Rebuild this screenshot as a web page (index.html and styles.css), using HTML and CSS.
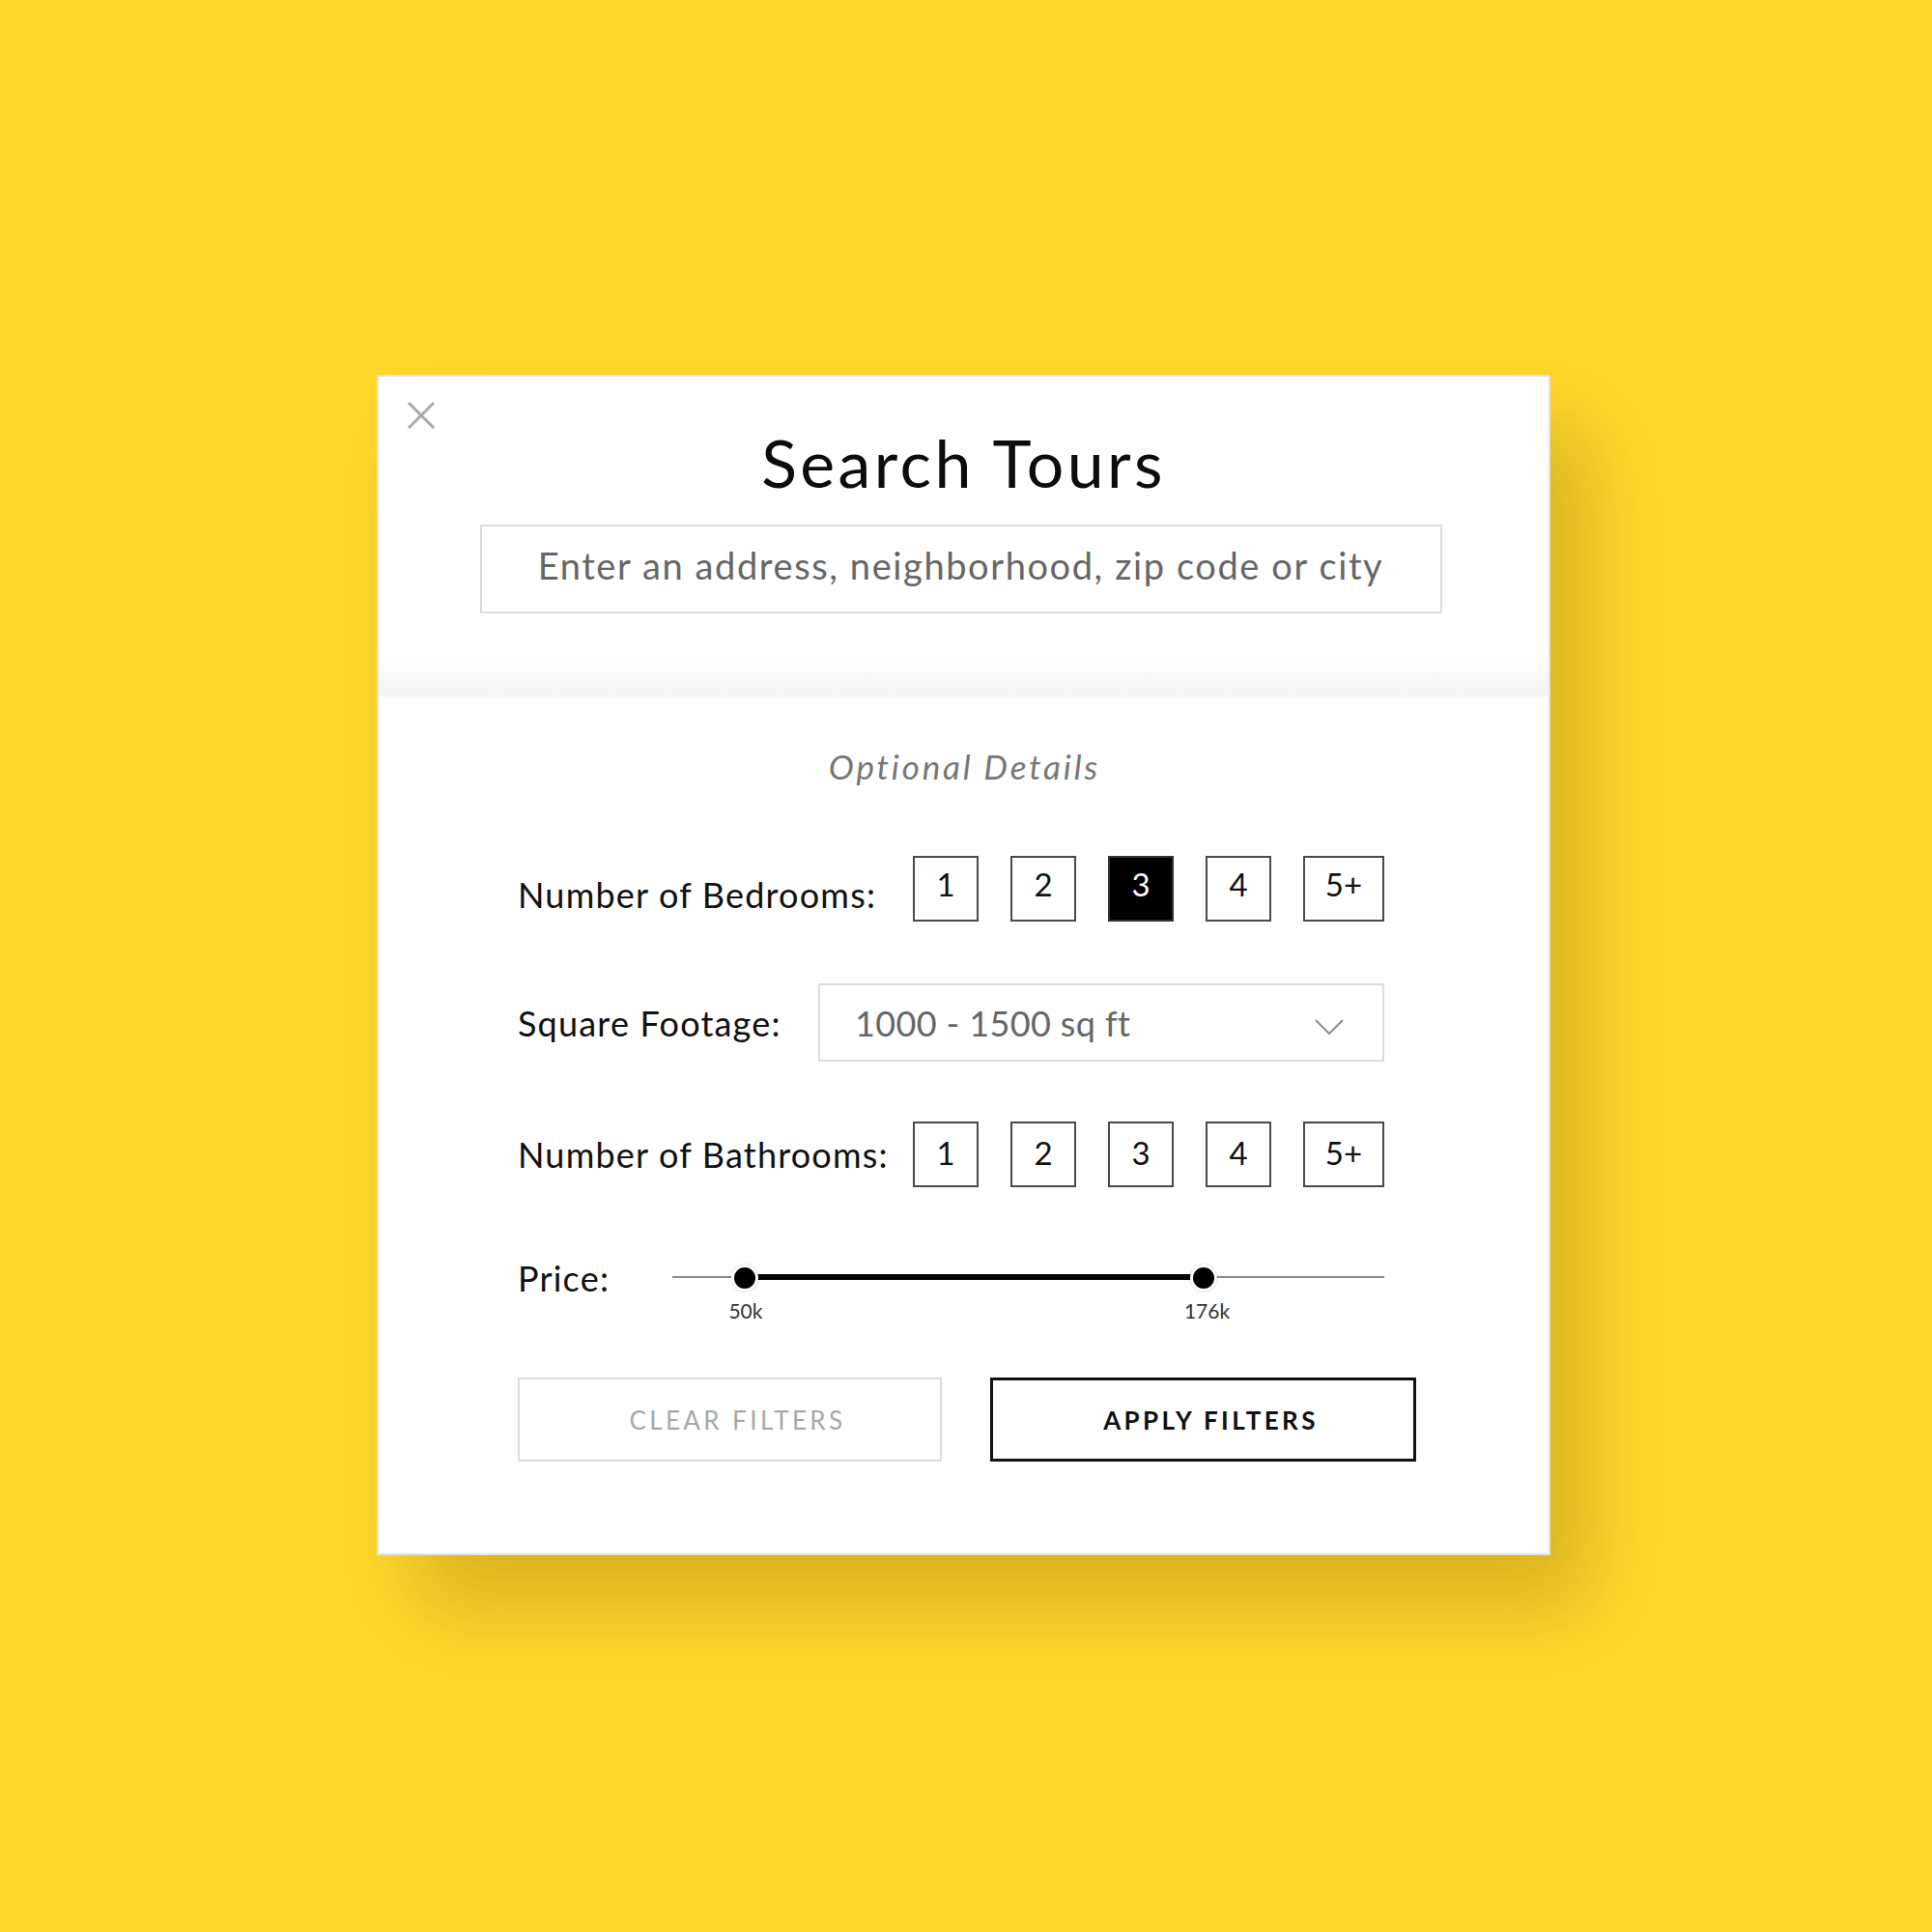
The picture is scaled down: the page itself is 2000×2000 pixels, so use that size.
FILE: index.html
```html
<!doctype html>
<html lang="en">
  <head>
    <meta charset="UTF-8" />
    <meta name="viewport" content="width=device-width, initial-scale=1.0" />
    <title>Search Tours</title>
    <link rel="stylesheet" href="styles.css">
  </head>
  <body>
    <div class="stage">
      <div class="search-modal">
        <div class="modal-head">
          <button class="close-btn" aria-label="Close">
            <svg width="30" height="30" viewBox="0 0 30 30">
              <path d="M2 2 L28 28 M28 2 L2 28" stroke="#a8a8a8" stroke-width="3" fill="none" />
            </svg>
          </button>
          <h1>Search Tours</h1>
          <input class="search-input" type="text" placeholder="Enter an address, neighborhood, zip code or city">
        </div>

        <div class="modal-body">
          <h2 class="optional">Optional Details</h2>

          <div class="filter-row rooms-row">
            <span class="filter-label label-low">Number of Bedrooms:</span>
            <div class="choices choices-high">
              <button class="choice">1</button>
              <button class="choice">2</button>
              <button class="choice active">3</button>
              <button class="choice">4</button>
              <button class="choice wide">5+</button>
            </div>
          </div>

          <div class="filter-row sqft-row">
            <span class="filter-label">Square Footage:</span>
            <div class="select">
              <span>1000 - 1500 sq ft</span>
              <svg width="30" height="16" viewBox="0 0 30 16">
                <path d="M1 1 L15 15 L29 1" stroke="#8c8c8c" stroke-width="2" fill="none" />
              </svg>
            </div>
          </div>

          <div class="filter-row rooms-row">
            <span class="filter-label">Number of Bathrooms:</span>
            <div class="choices">
              <button class="choice">1</button>
              <button class="choice">2</button>
              <button class="choice">3</button>
              <button class="choice">4</button>
              <button class="choice wide">5+</button>
            </div>
          </div>

          <div class="filter-row price-row">
            <span class="filter-label">Price:</span>
            <div class="slider">
              <div class="track"></div>
              <div class="range" style="left: 10.2%; right: 25.4%;"></div>
              <div class="thumb" style="left: 10.2%;"></div>
              <div class="thumb" style="left: 74.6%;"></div>
              <span class="tick" style="left: 10.3%;">50k</span>
              <span class="tick" style="left: 75.1%;">176k</span>
            </div>
          </div>

          <div class="actions">
            <button class="btn btn-clear">CLEAR FILTERS</button>
            <button class="btn btn-apply">APPLY FILTERS</button>
          </div>
        </div>
      </div>
    </div>
  </body>
</html>
```

FILE: styles.css
```css
* {
  margin: 0;
  padding: 0;
  box-sizing: border-box;
}

body {
  font-family: Lato, "Open Sans", sans-serif;
  background: #ffd82b;
  color: #111;
}

button,
input {
  font-family: inherit;
  background: none;
  border: none;
  outline: none;
}

.stage {
  min-height: 2000px;
  padding: 388px 0 0 390px;
}

.search-modal {
  width: 1215px;
  height: 1222px;
  background: #fff;
  border: 2px solid #e2e2e2;
  box-shadow: 40px 55px 80px rgba(110, 75, 0, 0.26);
  display: flex;
  flex-direction: column;
}

/* top part: title + address search */
.modal-head {
  position: relative;
  height: 331px;
  padding-top: 49px;
  display: flex;
  flex-direction: column;
  align-items: center;
  background: linear-gradient(#fff calc(100% - 46px), #f4f4f4);
}

.close-btn {
  position: absolute;
  top: 25px;
  left: 29px;
  width: 30px;
  height: 30px;
  cursor: pointer;
}

.close-btn svg {
  display: block;
}

h1 {
  font-size: 68px;
  line-height: 80px;
  font-weight: 400;
  letter-spacing: 3.4px;
  color: #0c0c0c;
}

.search-input {
  margin: 24px 6px 0 0;
  width: 996px;
  height: 92px;
  border: 2px solid #dcdcdc;
  padding-bottom: 8px;
  font-size: 38px;
  letter-spacing: 1.6px;
  text-align: center;
  color: #333;
}

.search-input::placeholder {
  color: #666;
}

/* optional filters */
.modal-body {
  flex: 1;
  padding: 52px 0 0 144px;
}

.optional {
  width: 925px;
  text-align: center;
  font-size: 35px;
  line-height: 40px;
  font-style: italic;
  font-weight: 400;
  letter-spacing: 2.8px;
  color: #777;
}

.filter-row {
  width: 897px;
  display: flex;
  align-items: center;
  justify-content: space-between;
}

.filter-label {
  font-size: 36px;
  letter-spacing: 1.2px;
  color: #111;
}

.label-low {
  margin-top: 12px;
}

.rooms-row {
  height: 68px;
}

.optional + .filter-row {
  margin-top: 73px;
}

.sqft-row {
  margin-top: 64px;
  height: 81px;
}

.sqft-row + .rooms-row {
  margin-top: 62px;
}

.choices {
  display: flex;
  gap: 33px;
}

.choice {
  width: 68px;
  height: 68px;
  border: 2px solid #4a4a4a;
  font-size: 33px;
  color: #111;
  display: flex;
  align-items: center;
  justify-content: center;
  padding-bottom: 4px;
  cursor: pointer;
}

.choices-high .choice {
  padding-bottom: 10px;
}

.choice.wide {
  width: 84px;
}

.choice.active {
  background: #000;
  border-color: #333;
  color: #fff;
}

.select {
  width: 586px;
  height: 81px;
  border: 2px solid #dcdcdc;
  padding: 0 40px 0 36px;
  display: flex;
  align-items: center;
  justify-content: space-between;
  font-size: 36px;
  letter-spacing: 0.4px;
  color: #666;
}

.select svg {
  margin-top: 8px;
}

/* price range slider */
.price-row {
  margin-top: 80px;
  height: 27px;
}

.slider {
  position: relative;
  width: 737px;
  height: 27px;
}

.track {
  position: absolute;
  left: 0;
  right: 0;
  top: 12px;
  height: 2px;
  background: #8a8a8a;
}

.range {
  position: absolute;
  top: 10px;
  height: 6px;
  background: #000;
}

.thumb {
  position: absolute;
  top: 0;
  width: 28px;
  height: 28px;
  margin-left: -14px;
  border-radius: 50%;
  background: #000;
  border: 3px solid #fff;
  box-shadow: 0 0 2px rgba(0, 0, 0, 0.25);
}

.tick {
  position: absolute;
  top: 36px;
  transform: translateX(-50%);
  font-size: 21px;
  line-height: 24px;
  color: #333;
}

/* footer buttons */
.actions {
  margin-top: 90px;
  width: 930px;
  display: flex;
  gap: 50px;
}

.btn {
  flex: 1;
  height: 87px;
  padding-left: 16px;
  font-size: 26px;
  letter-spacing: 3.4px;
  cursor: pointer;
}

.btn-clear {
  border: 2px solid #dcdcdc;
  color: #a8a8a8;
}

.btn-apply {
  border: 3px solid #111;
  color: #111;
  font-weight: 700;
}
```
